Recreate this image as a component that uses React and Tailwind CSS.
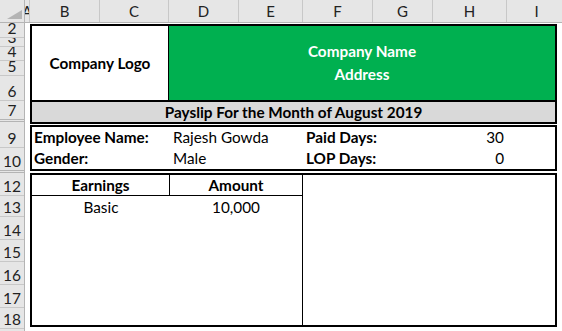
import React from "react";

const cols = [
  { l: "A", w: "w-[5px]" },
  { l: "B", w: "w-[70px]" },
  { l: "C", w: "w-[69px]" },
  { l: "D", w: "w-[70px]" },
  { l: "E", w: "w-[64px]" },
  { l: "F", w: "w-[70px]" },
  { l: "G", w: "w-[60px]" },
  { l: "H", w: "w-[74px]" },
  { l: "I", w: "w-[60px]" },
];

const rows = [
  { n: "2", h: "h-[15px]" },
  { n: "3", h: "h-[9px]" },
  { n: "4", h: "h-[14px]" },
  { n: "5", h: "h-[15px]" },
  { n: "6", h: "h-[25px]" },
  { n: "7", h: "h-[21px]", hidden: true },
  { n: "9", h: "h-[26px]" },
  { n: "10", h: "h-[25px]", hidden: true },
  { n: "12", h: "h-[23px]" },
  { n: "13", h: "h-[21px]" },
  { n: "14", h: "h-[23px]" },
  { n: "15", h: "h-[22px]" },
  { n: "16", h: "h-[23px]" },
  { n: "17", h: "h-[23px]" },
  { n: "18", h: "h-[21px]" },
  { n: "19", h: "h-[22px]" },
];

export default function App() {
  return (
    <div
      className="w-[562px] h-[331px] overflow-hidden bg-white flex flex-col text-black"
      style={{ fontFamily: "Lato, 'Open Sans', sans-serif" }}
    >
      {/* column header */}
      <div className="flex h-[23px] shrink-0 bg-[#e6e6e6] border-b border-[#b4b4b4]">
        <div className="w-[25px] shrink-0 border-r border-[#b4b4b4] flex items-end justify-end pr-[2px] pb-[3px]">
          <svg width="15" height="9" viewBox="0 0 15 9">
            <polygon points="15,0 15,9 0,9" fill="#b4b4b4" />
          </svg>
        </div>
        {cols.map((c) => (
          <div
            key={c.l}
            className={`${c.w} shrink-0 overflow-hidden border-r border-[#c8c8c8] flex items-center justify-center text-[15px] text-[#222] leading-none`}
          >
            {c.l}
          </div>
        ))}
      </div>

      <div className="flex flex-1 min-h-0">
        {/* row header */}
        <div className="w-[25px] shrink-0 flex flex-col bg-[#e6e6e6] border-r border-[#b4b4b4]">
          {rows.map((r) => (
            <div
              key={r.n}
              className={`${r.h} shrink-0 overflow-hidden flex items-end justify-center pb-[3px] text-[15.5px] leading-[12px] text-[#222] ${
                r.hidden ? "border-b-[3px] border-double border-[#b4b4b4]" : "border-b border-[#c8c8c8]"
              }`}
            >
              {r.n}
            </div>
          ))}
        </div>

        {/* sheet content */}
        <div className="flex-1 pl-[5px] pt-[1px] flex flex-col">
          {/* header box */}
          <div className="w-[527px] h-[78px] border-2 border-black flex">
            <div className="w-[137px] border-r border-black flex items-center justify-center font-bold text-[15.3px]">
              Company Logo
            </div>
            <div className="flex-1 bg-[#00b050] flex flex-col items-center justify-center text-white font-bold text-[15.3px] leading-[23px] pb-[1px]">
              <span>Company Name</span>
              <span>Address</span>
            </div>
          </div>

          {/* title */}
          <div className="w-[527px] h-[22px] border-x-2 border-b-2 border-black bg-[#d9d9d9] flex items-center justify-center font-bold text-[15.3px]">
            Payslip For the Month of August 2019
          </div>

          {/* employee box */}
          <div className="w-[527px] mt-[1px] border-2 border-black flex flex-col text-[15.3px]">
            <div className="flex h-[21px] items-center">
              <div className="w-[138px] pl-[2px] font-bold">Employee Name:</div>
              <div className="w-[133px] pl-[3px]">Rajesh Gowda</div>
              <div className="w-[130px] pl-[3px] font-bold">Paid Days:</div>
              <div className="w-[74px] pr-[3px] text-right">30</div>
            </div>
            <div className="flex h-[21px] items-center">
              <div className="w-[138px] pl-[2px] font-bold">Gender:</div>
              <div className="w-[133px] pl-[3px]">Male</div>
              <div className="w-[130px] pl-[3px] font-bold">LOP Days:</div>
              <div className="w-[74px] pr-[3px] text-right">0</div>
            </div>
          </div>

          {/* earnings box */}
          <div className="w-[527px] h-[154px] mt-[2px] border-2 border-black flex text-[15.3px]">
            <div className="w-[271px] border-r border-black flex flex-col">
              <div className="flex h-[21px] border-b border-black">
                <div className="w-[138px] border-r border-black flex items-center justify-center font-bold">
                  Earnings
                </div>
                <div className="flex-1 flex items-center justify-center font-bold">Amount</div>
              </div>
              <div className="flex h-[22px]">
                <div className="w-[138px] flex items-center justify-center">Basic</div>
                <div className="flex-1 flex items-center justify-center">10,000</div>
              </div>
            </div>
            <div className="flex-1" />
          </div>
        </div>
      </div>
    </div>
  );
}
